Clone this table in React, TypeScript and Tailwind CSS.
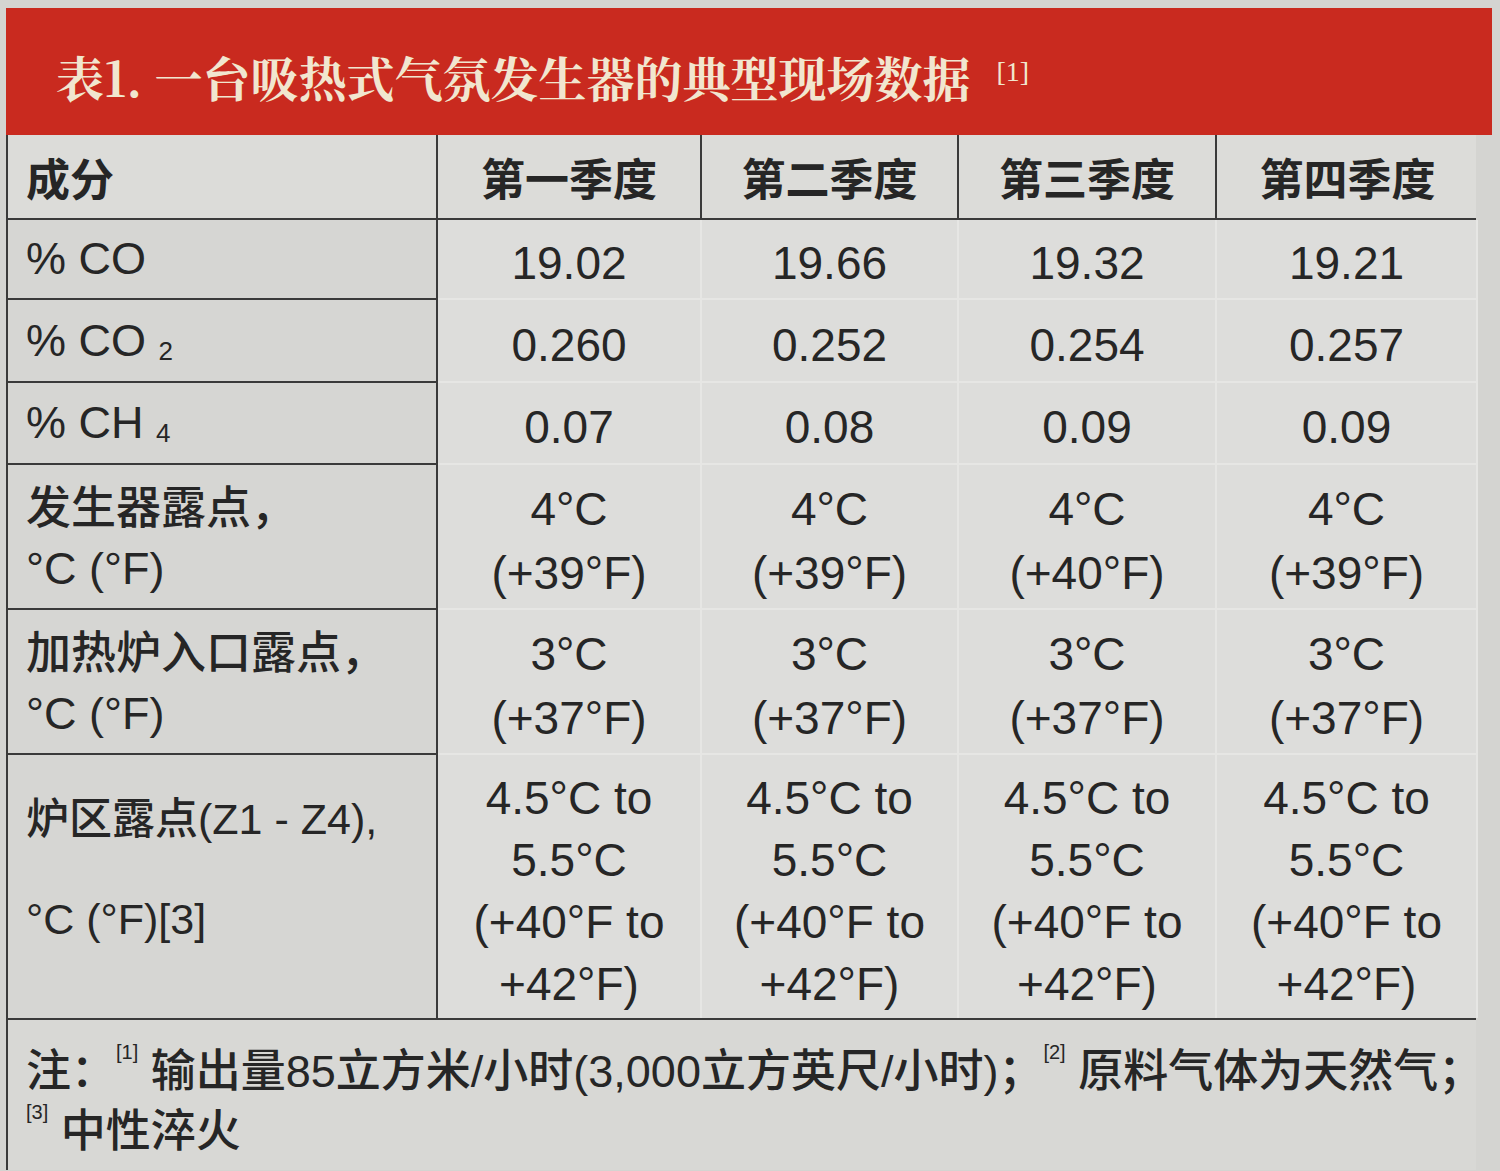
const sans = { fontFamily: '"Liberation Sans", Arial, "Noto Sans CJK SC", sans-serif' };
const cjk = { fontFamily: '"Noto Sans CJK SC", "Liberation Sans", sans-serif' };

type Row = { label: React.ReactNode; values: string[][]; h: string; labelClass?: string };

const rows: Row[] = [
  { label: '% CO', values: [['19.02'], ['19.66'], ['19.32'], ['19.21']], h: 'h-[80px]' },
  {
    label: (
      <>
        % CO <span className="text-[26px] align-[-4px]">2</span>
      </>
    ),
    values: [['0.260'], ['0.252'], ['0.254'], ['0.257']],
    h: 'h-[83px]',
  },
  {
    label: (
      <>
        % CH <span className="text-[26px] align-[-4px]">4</span>
      </>
    ),
    values: [['0.07'], ['0.08'], ['0.09'], ['0.09']],
    h: 'h-[82px]',
  },
  {
    label: (
      <>
        <div className="font-medium" style={cjk}>发生器露点，</div>
        <div>°C (°F)</div>
      </>
    ),
    values: [
      ['4°C', '(+39°F)'],
      ['4°C', '(+39°F)'],
      ['4°C', '(+40°F)'],
      ['4°C', '(+39°F)'],
    ],
    h: 'h-[145px]',
    labelClass: 'leading-[64px]',
  },
  {
    label: (
      <>
        <div className="font-medium" style={cjk}>加热炉入口露点，</div>
        <div>°C (°F)</div>
      </>
    ),
    values: [
      ['3°C', '(+37°F)'],
      ['3°C', '(+37°F)'],
      ['3°C', '(+37°F)'],
      ['3°C', '(+37°F)'],
    ],
    h: 'h-[145px]',
    labelClass: 'leading-[64px]',
  },
];

const range = ['4.5°C to', '5.5°C', '(+40°F to', '+42°F)'];

export default function App() {
  return (
    <div className="w-[1500px] h-[1171px] overflow-hidden bg-[#d4d4d1] pt-[8px]" style={sans}>
      {/* Title band */}
      <div className="ml-[6px] w-[1486px] h-[127px] bg-[#c92a1f] flex items-center pl-[50px] pt-[10px]">
        <span
          className="text-[48px] font-bold text-[#f1e6cf]"
          style={{ fontFamily: '"Noto Serif CJK SC", "Liberation Serif", serif' }}
        >
          表1. 一台吸热式气氛发生器的典型现场数据
        </span>
        <span
          className="ml-[26px] text-[28px] text-[#f1e6cf] -mt-[10px]"
          style={{ fontFamily: '"Liberation Serif", serif' }}
        >
          [1]
        </span>
      </div>

      {/* Table */}
      <div className="ml-[6px] w-[1470px] border-l-2 border-[#3a3a3a] text-[#262626]">
        {/* Header row */}
        <div
          className="grid grid-cols-[430px_264px_257px_258px_261px] h-[85px] border-b-2 border-[#3a3a3a] bg-[#dcdcd9] text-[44px] font-bold"
          style={cjk}
        >
          <div className="flex items-center pl-[18px] border-r-2 border-[#3a3a3a]">成分</div>
          <div className="flex items-center justify-center border-r-2 border-[#3a3a3a]">第一季度</div>
          <div className="flex items-center justify-center border-r-2 border-[#3a3a3a]">第二季度</div>
          <div className="flex items-center justify-center border-r-2 border-[#3a3a3a]">第三季度</div>
          <div className="flex items-center justify-center">第四季度</div>
        </div>

        {rows.map((r, i) => (
          <div key={i} className={`grid grid-cols-[430px_264px_257px_258px_261px] ${r.h}`}>
            <div
              className={`flex flex-col justify-center pl-[18px] bg-[#d6d6d3] border-r-2 border-b-2 border-[#3a3a3a] text-[45px] ${r.labelClass ?? ''}`}
            >
              <div>{r.label}</div>
            </div>
            {r.values.map((v, j) => (
              <div
                key={j}
                className="flex flex-col items-center justify-center pt-[8px] bg-[#dddddb] border-r-2 border-b-2 border-[#e6e6e4] text-[46px] leading-[64px]"
              >
                {v.map((t, k) => (
                  <div key={k}>{t}</div>
                ))}
              </div>
            ))}
          </div>
        ))}

        {/* Furnace zone row */}
        <div className="grid grid-cols-[430px_264px_257px_258px_261px] h-[265px] border-b-2 border-[#3a3a3a]">
          <div className="flex flex-col pt-[10px] pl-[18px] bg-[#d6d6d3] border-r-2 border-[#3a3a3a] text-[43px] leading-[100px]">
            <div>
              <span className="font-medium" style={cjk}>炉区露点</span>(Z1 - Z4),
            </div>
            <div>°C (°F)[3]</div>
          </div>
          {[0, 1, 2, 3].map((j) => (
            <div
              key={j}
              className="flex flex-col items-center justify-center pt-[8px] bg-[#dddddb] border-r-2 border-[#e6e6e4] text-[46px] leading-[62px]"
            >
              {range.map((t, k) => (
                <div key={k}>{t}</div>
              ))}
            </div>
          ))}
        </div>

        {/* Notes */}
        <div className="pt-[22px] pl-[18px] text-[45px] leading-[60px] bg-[#d8d8d5] h-[150px] whitespace-nowrap">
          <div className="font-medium">
            注：<sup className="text-[20px] font-normal align-[18px]">[1]</sup> 输出量85立方米/小时(3,000立方英尺/小时)；
            <sup className="text-[20px] font-normal align-[18px]">[2]</sup> 原料气体为天然气；
          </div>
          <div className="font-medium">
            <sup className="text-[20px] font-normal align-[18px]">[3]</sup> 中性淬火
          </div>
        </div>
      </div>
    </div>
  );
}
